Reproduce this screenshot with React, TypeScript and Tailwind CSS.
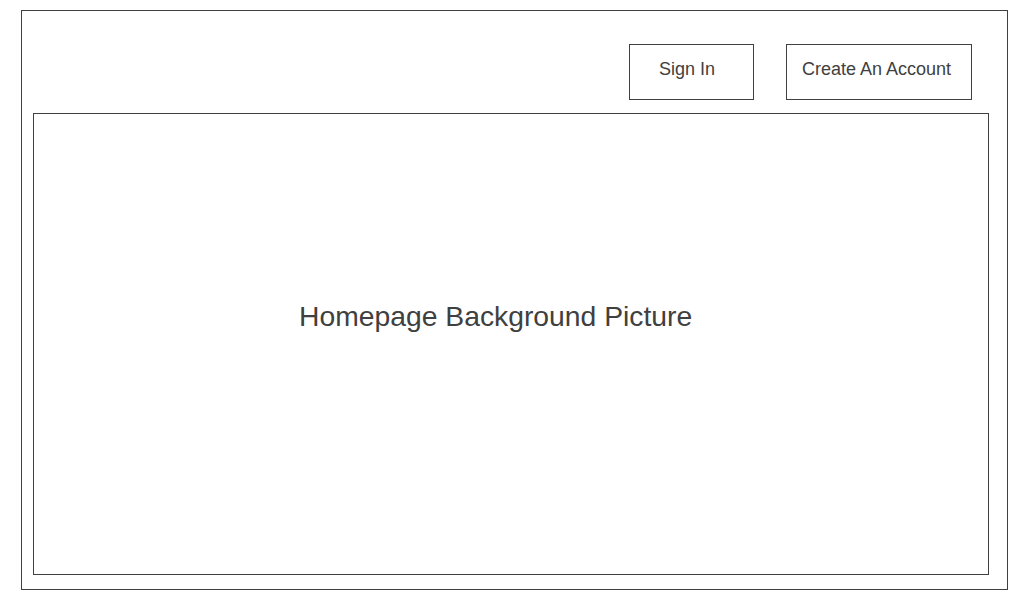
export default function App() {
    return (
        <div className="w-[1012px] h-[600px] bg-white pl-[21px] pt-[10px] font-['Liberation_Sans',Arial,sans-serif] text-[#404040]">
            <div className="w-[987px] h-[580px] border border-[#404040] pl-[11px] pt-[33px]">
                <div className="flex justify-end gap-[32px] pr-[35px] h-[56px]">
                    <div className="w-[125px] h-[56px] border border-[#404040] pl-[29px] pt-[14px] text-[18px] leading-[20px]">
                        Sign In
                    </div>
                    <div className="w-[186px] h-[56px] border border-[#404040] pl-[15px] pt-[14px] text-[18px] leading-[20px]">
                        Create An Account
                    </div>
                </div>
                <div className="mt-[13px] w-[956px] h-[462px] border border-[#404040] pl-[265px] pt-[186px]">
                    <p className="text-[28.3px] leading-[32px]">Homepage Background Picture</p>
                </div>
            </div>
        </div>
    );
}
